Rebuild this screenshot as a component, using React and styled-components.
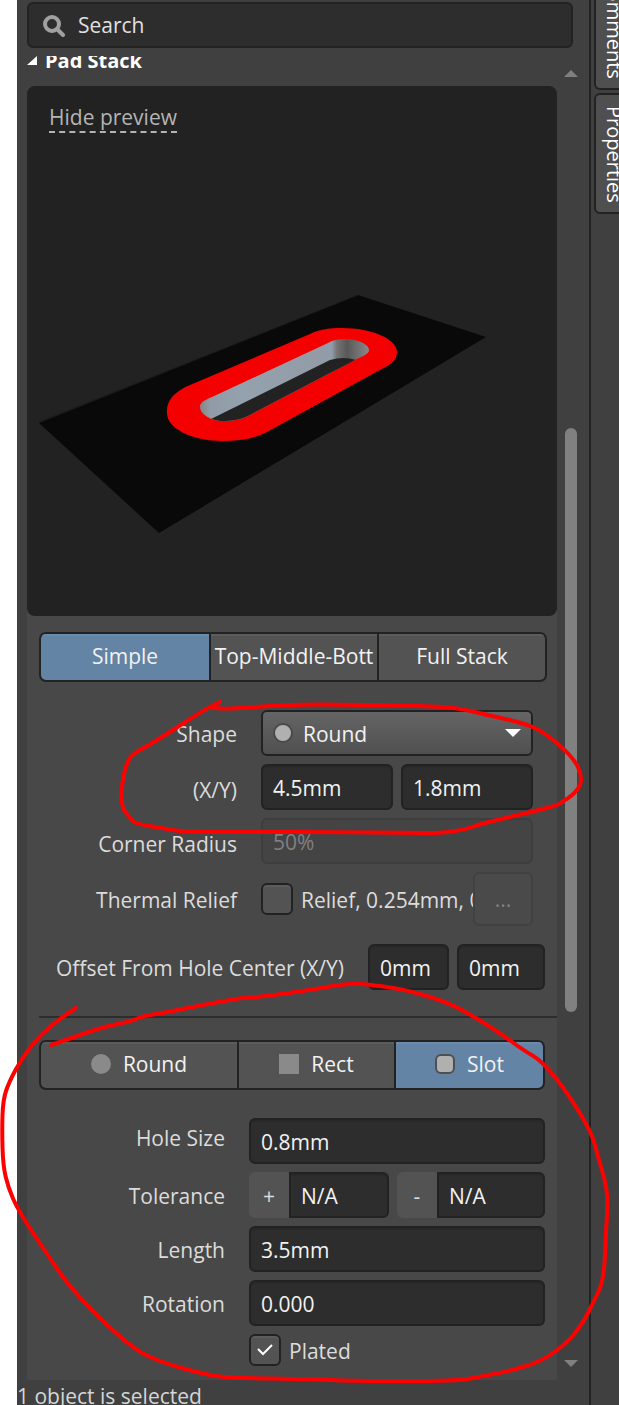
import React from 'react';
import styled, { createGlobalStyle, css } from 'styled-components';

const c = {
  window: '#404040',
  section: '#484848',
  field: '#2d2d2d',
  line: '#222222',
  button: '#535353',
  accent: '#6384a4',
  text: '#f2f2f2',
  label: '#dcdcdc',
  muted: '#808080',
};

const GlobalStyle = createGlobalStyle`
  *, *::before, *::after { box-sizing: border-box; }
  body { margin: 0; background: #ffffff; overflow-x: hidden; }
  body, button, input, select {
    font-family: "Open Sans", "Noto Sans", sans-serif;
    font-size: 21px;
    line-height: 28px;
  }
`;

const Page = styled.div`
  position: relative;
  display: flex;
  min-height: 100vh;
  padding-left: 17px;
  overflow: hidden;
`;

const Panel = styled.main`
  flex: 1;
  min-width: 0;
  display: flex;
  flex-direction: column;
  padding-top: 2px;
  background: ${c.window};
`;

const SearchBox = styled.label`
  display: flex;
  align-items: center;
  gap: 12px;
  height: 46px;
  margin: 0 16px 8px 10px;
  padding: 0 14px;
  border: 2px solid ${c.line};
  border-radius: 6px;
  background: ${c.field};
`;

const SearchInput = styled.input`
  flex: 1;
  min-width: 0;
  padding: 0;
  border: 0;
  outline: 0;
  background: none;
  color: ${c.text};
  &::placeholder { color: #e0e0e0; opacity: 1; }
`;

const Body = styled.div`
  flex: 1;
  display: flex;
  padding-left: 10px;
`;

const Content = styled.div`
  flex: 1;
  min-width: 0;
  display: flex;
  flex-direction: column;
`;

const SectionTitle = styled.h2`
  display: flex;
  align-items: flex-end;
  gap: 8px;
  height: 18px;
  margin: 0 0 12px;
  overflow: hidden;
  color: #ffffff;
  font-size: 20px;
  line-height: 26px;
  font-weight: 700;
  svg { margin-bottom: 9px; }
`;

const PreviewArea = styled.div`
  background: linear-gradient(${c.window} 50%, ${c.section} 50%);
`;

const Preview = styled.div`
  display: grid;
  border-radius: 8px;
  background: ${c.line};
  & > * { grid-area: 1 / 1; }
`;

const PreviewLink = styled.a`
  z-index: 1;
  justify-self: start;
  align-self: start;
  margin: 18px 22px;
  border-bottom: 2px dashed #b4b4b4;
  color: #b4b4b4;
  line-height: 27px;
  text-decoration: none;
`;

const Scene = styled.svg`
  display: block;
  width: 100%;
  height: auto;
`;

const Form = styled.form`
  flex: 1;
  padding: 16px 0 14px;
  background: ${c.section};
`;

const Segments = styled.div`
  display: flex;
  height: 50px;
  margin: 0 ${(p) => p.$right}px 28px 12px;
  border: 2px solid ${c.line};
  border-radius: 7px;
  background: ${c.line};
  gap: 2px;
  overflow: hidden;
`;

const Segment = styled.button`
  flex: ${(p) => p.$grow || 1} 1 0;
  min-width: 0;
  display: flex;
  align-items: center;
  justify-content: center;
  gap: 12px;
  padding: 0 0 2px;
  border: 0;
  overflow: hidden;
  white-space: nowrap;
  color: ${c.text};
  background: ${(p) => (p.$active ? c.accent : c.button)};
  box-shadow: inset 0 2px 0 ${(p) => (p.$active ? '#6a8baa' : '#5c5c5c')};
`;

const Rows = styled.div`
  display: grid;
  grid-template-columns: ${(p) => p.$label}px minmax(0, 1fr);
  align-items: center;
  gap: 8px 24px;
  padding-right: ${(p) => p.$right}px;
`;

const labelPadding = { low: '6px 0 0', mid: '2px 0 0', high: '0 0 6px' };

const Label = styled.label`
  padding: ${(p) => labelPadding[p.$align || 'mid']};
  text-align: right;
  white-space: nowrap;
  color: ${c.label};
`;

const Fields = styled.div`
  display: flex;
  align-items: center;
  gap: 8px;
  min-width: 0;
`;

const fieldBox = css`
  height: 46px;
  border: 2px solid ${c.line};
  border-radius: 6px;
  background: ${c.field};
  color: ${c.text};
`;

const Field = styled.input`
  ${fieldBox}
  flex: ${(p) => p.$grow || 1} 1 0;
  width: 100%;
  min-width: 0;
  padding: 2px 10px 0;
  box-shadow: inset 0 2px 0 #292929;
  &:disabled {
    border-color: #3e3e3e;
    background: #444444;
    box-shadow: none;
    color: ${c.muted};
  }
`;

const SelectBox = styled.div`
  ${fieldBox}
  display: grid;
  align-items: center;
  background: linear-gradient(#656565, #505050);
  & > * { grid-area: 1 / 1; }
  & > svg { pointer-events: none; }
  & > svg:first-child { margin-left: 10px; }
  & > svg:last-child { justify-self: end; margin-right: 10px; }
`;

const Select = styled.select`
  appearance: none;
  width: 100%;
  height: 42px;
  padding: 2px 32px 0 40px;
  border: 0;
  outline: 0;
  background: none;
  color: ${c.text};
`;

const Check = styled.input`
  appearance: none;
  flex: none;
  width: 32px;
  height: 32px;
  margin: 0;
  border: 2px solid ${c.line};
  border-radius: 6px;
  background: ${c.button};
  box-shadow: inset 0 2px 0 #5c5c5c;
`;

const CheckMark = styled.span`
  display: grid;
  flex: none;
  & > * { grid-area: 1 / 1; }
  & > svg { place-self: center; pointer-events: none; }
`;

const CheckText = styled.label`
  padding-top: 2px;
  color: ${c.label};
  white-space: nowrap;
`;

const ReliefRow = styled(Fields)`
  gap: 0;
`;

const ReliefText = styled(CheckText)`
  flex: 1;
  min-width: 0;
  margin-left: 8px;
  overflow: hidden;
`;

const MoreButton = styled.button`
  flex: none;
  width: 60px;
  height: 54px;
  padding: 0;
  border: 2px solid #414141;
  border-radius: 6px;
  background: #4a4a4a;
  color: ${c.muted};
`;

const OffsetRow = styled.div`
  display: grid;
  grid-template-columns: minmax(0, 1fr) 81px 88px;
  align-items: center;
  gap: 8px;
  margin: 18px 12px 26px 0;
  ${Label} { margin-right: 16px; }
`;

const Divider = styled.hr`
  margin: 0 0 22px 12px;
  border: 0;
  border-top: 2px solid #2d2d2d;
`;

const Tolerance = styled.div`
  flex: ${(p) => p.$grow} 1 0;
  min-width: 0;
  display: flex;
  ${Field} { border-radius: 0 6px 6px 0; }
`;

const Sign = styled.button`
  flex: none;
  width: 40px;
  height: 46px;
  padding: 2px 0 0;
  border: 0;
  border-radius: 6px 0 0 6px;
  background: ${c.button};
  color: ${c.label};
`;

const ScrollBar = styled.div`
  flex: none;
  width: 32px;
  display: flex;
  flex-direction: column;
  align-items: center;
  padding: 14px 4px 13px 0;
`;

const Space = styled.div`
  flex: ${(p) => p.$grow} 0 0;
`;

const Thumb = styled.div`
  flex: 584 0 0;
  width: 12px;
  border-radius: 6px;
  background: #808080;
`;

const Status = styled.footer`
  height: 25px;
  overflow: hidden;
  color: #d6d6d6;
  line-height: 32px;
  white-space: nowrap;
`;

const Rail = styled.nav`
  flex: none;
  width: 30px;
  display: flex;
  flex-direction: column;
  gap: 3px;
  padding-left: 3px;
  border-left: 2px solid ${c.line};
  background: ${c.window};
  overflow: hidden;
`;

const RailTab = styled.button`
  display: flex;
  align-items: center;
  justify-content: flex-end;
  width: 40px;
  height: ${(p) => p.$height}px;
  padding: 9px 3px;
  border: 2px solid ${c.line};
  border-top-width: ${(p) => (p.$cut ? 0 : 2)}px;
  border-radius: ${(p) => (p.$cut ? '0 0 0 6px' : '6px 0 0 6px')};
  background: #4f4f4f;
  color: #ffffff;
  font-size: 20px;
  writing-mode: vertical-rl;
  white-space: nowrap;
  overflow: hidden;
`;

const Ink = styled.svg`
  position: absolute;
  inset: 0;
  width: 100%;
  height: 100%;
  pointer-events: none;
  path {
    fill: none;
    stroke: #ff0000;
    stroke-width: 4px;
    stroke-linecap: round;
    stroke-linejoin: round;
    vector-effect: non-scaling-stroke;
  }
`;

const upperLoop = [
  [220, 702], [210, 706], [153, 743], [132, 754], [126, 765], [122, 783], [121, 807], [132, 820],
  [137, 824], [162, 828], [177, 831], [207, 832], [253, 832], [330, 832], [423, 833], [443, 833],
  [467, 829], [480, 824], [510, 817], [543, 809], [558, 805], [562, 802], [573, 795], [581, 785],
  [581, 773], [575, 761], [563, 748], [542, 731], [523, 723], [483, 714], [458, 708], [427, 706],
  [310, 704], [267, 706], [230, 709], [213, 708],
];

const lowerLoop = [
  [76, 1008], [62, 1017], [40, 1035], [22, 1058], [9, 1082], [3, 1100], [2, 1130], [3, 1165],
  [8, 1187], [18, 1210], [43, 1248], [73, 1292], [130, 1347], [160, 1362], [207, 1375], [233, 1378],
  [310, 1379], [350, 1381], [433, 1381], [463, 1380], [483, 1376], [510, 1371], [542, 1361],
  [567, 1343], [583, 1323], [593, 1303], [604, 1280], [606, 1230], [608, 1200], [605, 1180],
  [598, 1157], [592, 1133], [567, 1092], [542, 1061], [523, 1050], [500, 1033], [473, 1016],
  [447, 1002], [407, 990], [373, 985], [350, 983], [310, 990], [260, 997], [247, 997], [207, 1004],
  [163, 1013], [143, 1016], [132, 1021], [103, 1027], [80, 1035], [51, 1045],
];

function stroke(points) {
  const parts = [`M${points[0]}`];
  for (let i = 1; i < points.length - 1; i += 1) {
    const [x, y] = points[i];
    const [nx, ny] = points[i + 1];
    parts.push(`Q${x} ${y} ${(x + nx) / 2} ${(y + ny) / 2}`);
  }
  parts.push(`L${points[points.length - 1]}`);
  return parts.join(' ');
}

const holePath =
  'M200 407 C200 402 205 400 212 397 L328 343 C333 340 338 339 345 339 C357 339 369 344 369 350 C369 354 363 356 355 360 L248 416 C240 420 232 421 223 421 C211 421 200 414 200 407 Z';

function PadScene() {
  return (
    <Scene viewBox="27 86 530 530" role="img" aria-label="Pad preview">
      <defs>
        <linearGradient id="wall" x1="200" x2="369" y1="0" y2="0" gradientUnits="userSpaceOnUse">
          <stop offset="0" stopColor="#858585" />
          <stop offset="0.06" stopColor="#909ba6" />
          <stop offset="0.25" stopColor="#94a1ae" />
          <stop offset="0.72" stopColor="#939ca6" />
          <stop offset="0.78" stopColor="#8f9dab" />
          <stop offset="0.81" stopColor="#747474" />
          <stop offset="0.87" stopColor="#585858" />
          <stop offset="1" stopColor="#8a8a8a" />
        </linearGradient>
        <clipPath id="hole"><path d={holePath} /></clipPath>
      </defs>
      <path d="M358 295 L486 337 L159 533 L39 423 Z" fill="#090909" />
      <path d="M39 422 L358 295" stroke="#171b1f" fill="none" />
      <path
        d="M167 413 C166 402 173 392 190 385 L310 334 C320 329 330 328 342 328 C372 328 397 339 397 352 C397 361 390 365 378 371 L267 432 C253 439 239 441 223 441 C191 441 167 428 167 413 Z"
        fill="#f50000"
      />
      <g clipPath="url(#hole)">
        <rect x="199" y="338" width="172" height="84" fill="url(#wall)" />
        <path d="M211 419 L330 360 Q344 356 356 360 L372 365 L260 425 L211 425 Z" fill="#222222" />
      </g>
    </Scene>
  );
}

export default function App() {
  return (
    <>
      <GlobalStyle />
      <Page>
        <Panel>
          <SearchBox>
            <svg width="23" height="23" viewBox="0 0 23 23" fill="none" stroke="#a0a0a0">
              <circle cx="9" cy="10" r="7" strokeWidth="4" />
              <path d="M14 15 L20 21" strokeWidth="4" strokeLinecap="round" />
            </svg>
            <SearchInput type="text" placeholder="Search" aria-label="Search" />
          </SearchBox>
          <Body>
            <Content>
              <SectionTitle>
                <svg width="10" height="9" viewBox="0 0 10 9"><path d="M10 0 V9 H0 Z" fill="#fff" /></svg>
                Pad Stack
              </SectionTitle>
              <PreviewArea>
                <Preview>
                  <PreviewLink href="#preview">Hide preview</PreviewLink>
                  <PadScene />
                </Preview>
              </PreviewArea>
              <Form onSubmit={(e) => e.preventDefault()}>
                <Segments $right={10}>
                  <Segment type="button" $grow={168} $active>Simple</Segment>
                  <Segment type="button" $grow={166}>Top-Middle-Bott</Segment>
                  <Segment type="button" $grow={166}>Full Stack</Segment>
                </Segments>
                <Rows $label={210} $right={24}>
                  <Label htmlFor="shape">Shape</Label>
                  <SelectBox>
                    <svg width="20" height="20" viewBox="0 0 20 20">
                      <circle cx="10" cy="10" r="9" fill="#b0b0b0" stroke="#4a4a4a" strokeWidth="2" />
                    </svg>
                    <Select id="shape" defaultValue="Round">
                      <option>Round</option>
                    </Select>
                    <svg width="16" height="8" viewBox="0 0 16 8"><path d="M0 0 H16 L8 8 Z" fill="#fff" /></svg>
                  </SelectBox>
                  <Label htmlFor="size-x" $align="low">(X/Y)</Label>
                  <Fields>
                    <Field id="size-x" defaultValue="4.5mm" />
                    <Field aria-label="Size Y" defaultValue="1.8mm" />
                  </Fields>
                  <Label htmlFor="corner" $align="low">Corner Radius</Label>
                  <Field id="corner" defaultValue="50%" disabled />
                  <Label htmlFor="relief">Thermal Relief</Label>
                  <ReliefRow>
                    <Check id="relief" type="checkbox" />
                    <ReliefText htmlFor="relief">Relief, 0.254mm, 0</ReliefText>
                    <MoreButton type="button" disabled>...</MoreButton>
                  </ReliefRow>
                </Rows>
                <OffsetRow>
                  <Label htmlFor="offset-x">Offset From Hole Center (X/Y)</Label>
                  <Field id="offset-x" defaultValue="0mm" />
                  <Field aria-label="Offset Y" defaultValue="0mm" />
                </OffsetRow>
                <Divider />
                <Segments $right={12}>
                  <Segment type="button" $grow={196}>
                    <svg width="20" height="20" viewBox="0 0 20 20"><circle cx="10" cy="10" r="10" fill="#8a8a8a" /></svg>
                    Round
                  </Segment>
                  <Segment type="button" $grow={155}>
                    <svg width="20" height="20" viewBox="0 0 20 20"><rect width="20" height="20" fill="#8a8a8a" /></svg>
                    Rect
                  </Segment>
                  <Segment type="button" $grow={147} $active>
                    <svg width="20" height="20" viewBox="0 0 20 20">
                      <rect x="1" y="1" width="18" height="18" rx="5" fill="#b0b0b0" stroke="#4f4f4f" strokeWidth="2" />
                    </svg>
                    Slot
                  </Segment>
                </Segments>
                <Rows $label={198} $right={12}>
                  <Label htmlFor="hole" $align="high">Hole Size</Label>
                  <Field id="hole" defaultValue="0.8mm" />
                  <Label htmlFor="tol-plus">Tolerance</Label>
                  <Fields>
                    <Tolerance $grow={140}>
                      <Sign type="button">+</Sign>
                      <Field id="tol-plus" defaultValue="N/A" />
                    </Tolerance>
                    <Tolerance $grow={148}>
                      <Sign type="button">-</Sign>
                      <Field aria-label="Negative tolerance" defaultValue="N/A" />
                    </Tolerance>
                  </Fields>
                  <Label htmlFor="length">Length</Label>
                  <Field id="length" defaultValue="3.5mm" />
                  <Label htmlFor="rotation">Rotation</Label>
                  <Field id="rotation" defaultValue="0.000" />
                  <span />
                  <Fields>
                    <CheckMark>
                      <Check id="plated" type="checkbox" defaultChecked />
                      <svg width="16" height="12" viewBox="0 0 16 12">
                        <path d="M1 5 L6 10 L15 1" fill="none" stroke="#fff" strokeWidth="2" />
                      </svg>
                    </CheckMark>
                    <CheckText htmlFor="plated">Plated</CheckText>
                  </Fields>
                </Rows>
              </Form>
            </Content>
            <ScrollBar>
              <svg width="14" height="7" viewBox="0 0 14 7"><path d="M0 7 L7 0 L14 7 Z" fill="#808080" /></svg>
              <Space $grow={351} />
              <Thumb />
              <Space $grow={348} />
              <svg width="14" height="7" viewBox="0 0 14 7"><path d="M0 0 L7 7 L14 0 Z" fill="#808080" /></svg>
            </ScrollBar>
          </Body>
          <Status>1 object is selected</Status>
        </Panel>
        <Rail>
          <RailTab type="button" $height={90} $cut>Comments</RailTab>
          <RailTab type="button" $height={121}>Properties</RailTab>
        </Rail>
        <Ink viewBox="0 0 619 1405" preserveAspectRatio="none" aria-hidden="true">
          <path d={stroke(upperLoop)} />
          <path d={stroke(lowerLoop)} />
        </Ink>
      </Page>
    </>
  );
}
